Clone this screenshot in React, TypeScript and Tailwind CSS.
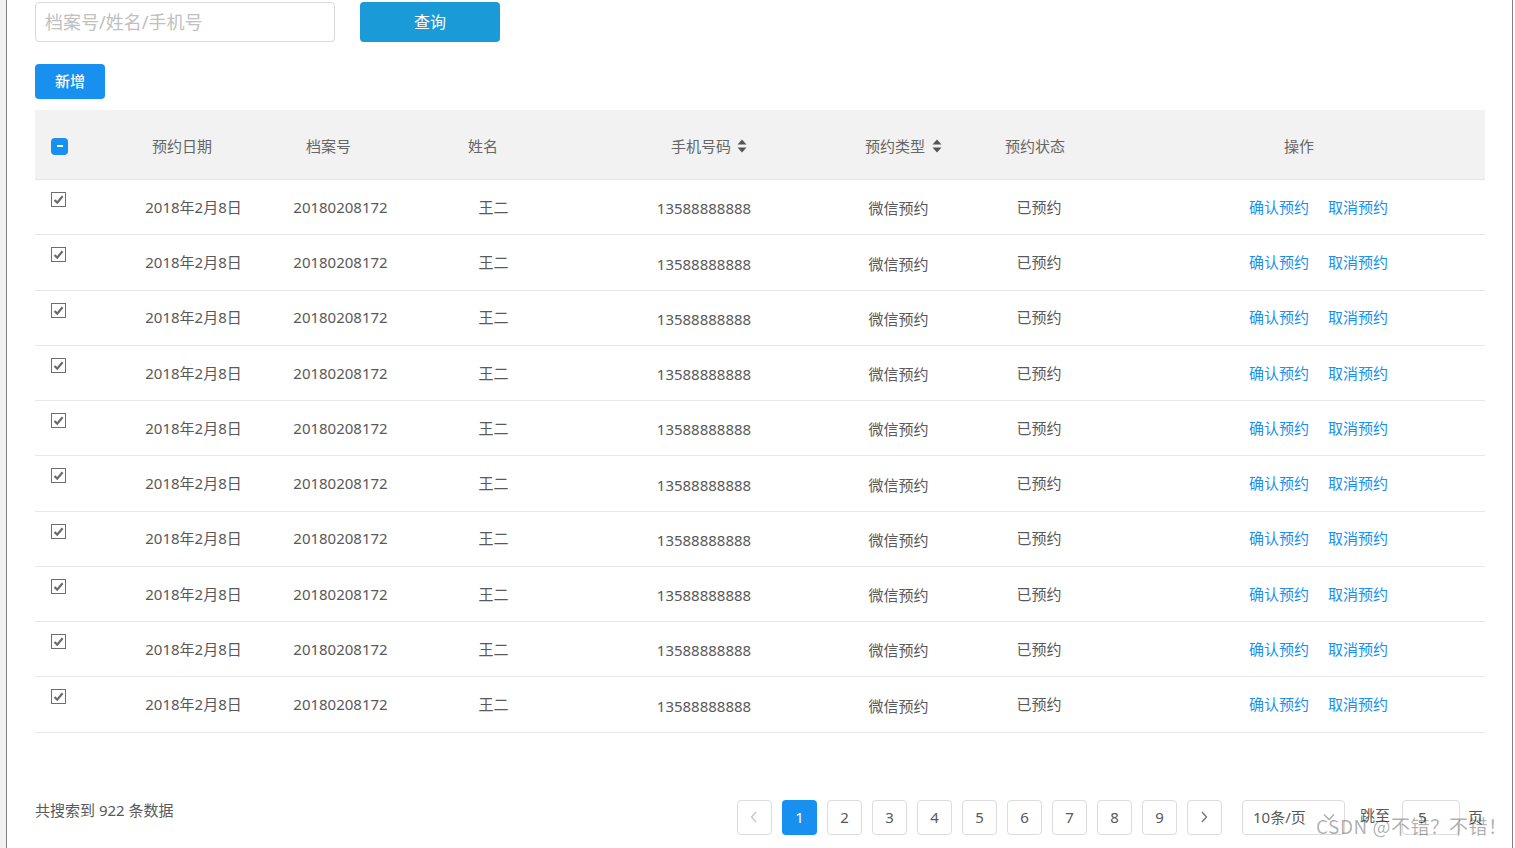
import React from "react";

const FONT = { fontFamily: '"Noto Sans", "Noto Sans CJK SC", sans-serif' };

function SortIcon() {
  return (
    <svg width="10" height="14" viewBox="0 0 10 14" className="inline-block">
      <path d="M5 0.5 L9.5 5.5 L0.5 5.5 Z" fill="#555" />
      <path d="M5 13.5 L9.5 8.5 L0.5 8.5 Z" fill="#555" />
    </svg>
  );
}

function RowCheck() {
  return (
    <div className="w-[15px] h-[15px] border-[1.5px] border-[#6e6e6e] bg-white flex items-center justify-center">
      <svg width="11" height="11" viewBox="0 0 11 11">
        <path d="M1.5 6 L4.2 8.6 L9.6 2.2" stroke="#6a6a6a" strokeWidth="2.2" fill="none" />
      </svg>
    </div>
  );
}

const rows = Array.from({ length: 10 });

export default function App() {
  return (
    <div className="flex w-[1515px] h-[848px] overflow-hidden bg-white text-[#595959]" style={FONT}>
      <div className="w-[6px] h-full bg-[#f2f2f2]" />
      <div className="relative w-[1507px] h-full border-l border-r border-[#808080] bg-white pl-[28px] pr-[26px] pt-[2px]">
        {/* search bar */}
        <div className="flex items-center gap-[25px]">
          <div className="w-[300px] h-[40px] border border-[#d9d9d9] rounded-[4px] flex items-center pl-[9px] text-[18px] text-[#c0c0c0]">
            档案号/姓名/手机号
          </div>
          <button className="w-[140px] h-[40px] rounded-[4px] bg-[#1a9bd7] text-white text-[16px]">查询</button>
        </div>
        <div className="mt-[22px]">
          <button className="w-[70px] h-[35px] rounded-[4px] bg-[#1890f0] text-white text-[15px] font-medium">新增</button>
        </div>

        {/* table */}
        <div className="mt-[11px] w-[1450px] text-[15px]">
          <div className="flex items-center h-[70px] pt-[3px] bg-[#f2f2f2] border-b border-[#e6e6e6] text-[#666]">
            <div className="w-[90px] pl-[16px] flex items-center">
              <div className="w-[17px] h-[17px] rounded-[4px] bg-[#1890f0] flex items-center justify-center">
                <div className="w-[6px] h-[2px] bg-white" />
              </div>
            </div>
            <div className="w-[137px] text-center pr-[23px]">预约日期</div>
            <div className="w-[157px] text-center pr-[24px]">档案号</div>
            <div className="w-[149px] text-center pr-[21px]">姓名</div>
            <div className="w-[272px] pl-[10px] flex items-center justify-center gap-[6px]">
              <span>手机号码</span>
              <SortIcon />
            </div>
            <div className="w-[117px] pl-[10px] flex items-center justify-center gap-[7px] whitespace-nowrap">
              <span>预约类型</span>
              <SortIcon />
            </div>
            <div className="w-[164px] text-center pr-[8px]">预约状态</div>
            <div className="w-[364px] text-center pr-[8px]">操作</div>
          </div>
          {rows.map((_, i) => (
            <div key={i} className="relative flex items-center h-[55.25px] border-b border-[#e8e8e8]">
              <div className="w-[90px] pl-[16px] self-start pt-[12px]">
                <RowCheck />
              </div>
              <div className="w-[137px] text-center whitespace-nowrap">2018年2月8日</div>
              <div className="w-[157px] text-center">20180208172</div>
              <div className="w-[149px] text-center">王二</div>
              <div className="w-[272px] text-center pt-[3px]">13588888888</div>
              <div className="w-[117px] text-center pt-[3px]">微信预约</div>
              <div className="w-[164px] text-center">已预约</div>
              <div className="w-[364px] pl-[31px] flex justify-center gap-[19px] text-[#1890f0] whitespace-nowrap">
                <span>确认预约</span>
                <span>取消预约</span>
              </div>
            </div>
          ))}
        </div>

        {/* footer */}
        <div className="mt-[67px] w-[1448px] flex justify-between items-start text-[15px]">
          <div className="leading-[20px]">共搜索到 922 条数据</div>
          <div className="flex items-center">
            <div className="flex gap-[10px]">
              <div className="w-[35px] h-[35px] border border-[#dcdcdc] rounded-[4px] flex items-center justify-center">
                <svg width="10" height="12" viewBox="0 0 10 12">
                  <path d="M7 1 L2.5 6 L7 11" stroke="#c8c8c8" strokeWidth="1.4" fill="none" />
                </svg>
              </div>
              {[1, 2, 3, 4, 5, 6, 7, 8, 9].map((n) => (
                <div
                  key={n}
                  className={
                    n === 1
                      ? "w-[35px] h-[35px] rounded-[4px] bg-[#1890f0] text-white flex items-center justify-center"
                      : "w-[35px] h-[35px] border border-[#dcdcdc] rounded-[4px] flex items-center justify-center"
                  }
                >
                  {n}
                </div>
              ))}
              <div className="w-[35px] h-[35px] border border-[#dcdcdc] rounded-[4px] flex items-center justify-center">
                <svg width="10" height="12" viewBox="0 0 10 12">
                  <path d="M3 1 L7.5 6 L3 11" stroke="#777" strokeWidth="1.4" fill="none" />
                </svg>
              </div>
            </div>
            <div className="ml-[20px] w-[103px] h-[35px] border border-[#dcdcdc] rounded-[4px] flex items-center justify-between pl-[10px] pr-[9px]">
              <span>10条/页</span>
              <svg width="12" height="8" viewBox="0 0 12 8">
                <path d="M1 1.5 L6 6.5 L11 1.5" stroke="#aaa" strokeWidth="1.3" fill="none" />
              </svg>
            </div>
            <span className="ml-[15px] -mt-[4px]">跳至</span>
            <div className="ml-[12px] w-[58px] h-[35px] border border-[#dcdcdc] rounded-[4px] flex items-center pl-[15px]">5</div>
            <span className="ml-[8px]">页</span>
          </div>
        </div>

        <div className="absolute left-[1309px] top-[812px] text-[19px] tracking-[0.5px] text-[rgba(0,0,0,0.33)] whitespace-nowrap" style={{ fontFamily: '"Noto Sans CJK SC", sans-serif' }}>
          CSDN @不错<span className="inline-block w-[19px] text-center">？</span>不错<span className="inline-block w-[19px] text-center">！</span>
        </div>
      </div>
    </div>
  );
}
